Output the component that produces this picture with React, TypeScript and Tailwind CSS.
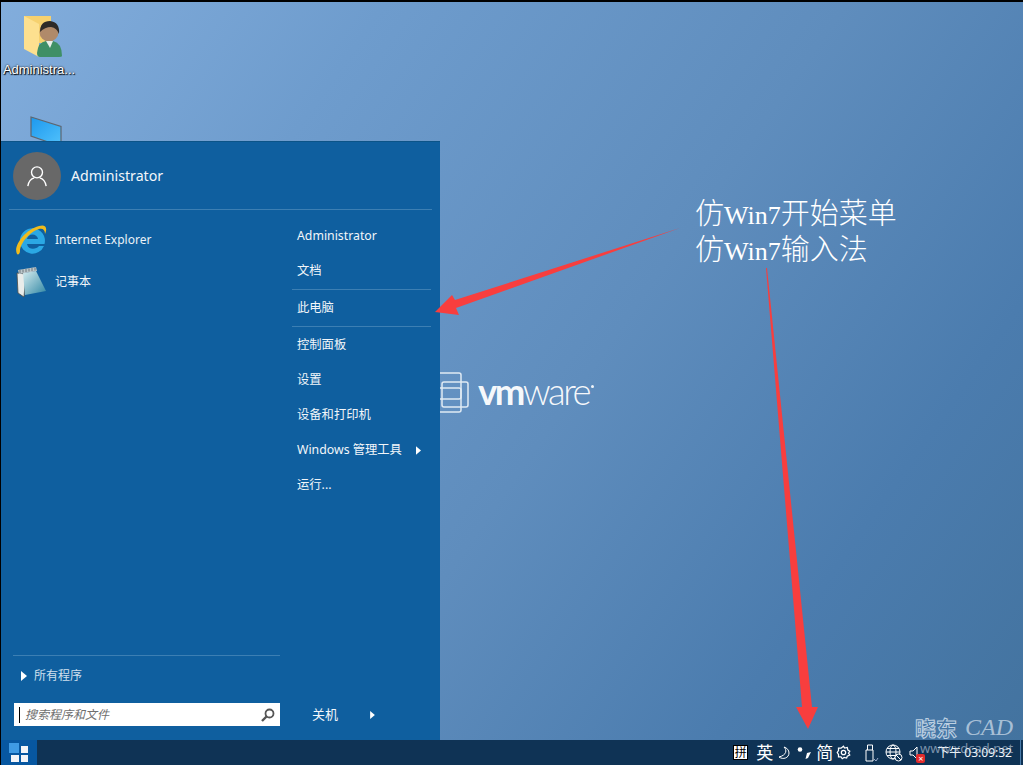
import { ReactNode } from "react";

const uiFont = "font-['Noto_Sans','Noto_Sans_CJK_SC',sans-serif]";

const Triangle = ({ className }: { className: string }) => (
  <svg viewBox="0 0 6 10" className={className}>
    <path d="M0 0 L6 5 L0 10 Z" fill="#fff" />
  </svg>
);

const FolderUser = () => (
  <svg viewBox="0 0 48 48" className="w-12 h-12">
    <path d="M9 3 H36 V30 H9 Z" fill="#f6d16f" />
    <path d="M9 3 L24 11 V44 L9 36 Z" fill="#fde08f" />
    <path d="M22 40 Q23 29 31 28 H38 Q47 30 47 43 Q47 44 44 44 H25 Q22 44 22 40 Z" fill="#3f8f66" />
    <circle cx="34" cy="19" r="9.5" fill="#b08a6a" />
    <path d="M25 19 Q25 8 35 8 Q45 9 44 21 Q42 15 36 14 Q30 14 25 19 Z" fill="#2d2a28" />
    <path d="M31 28 L35 35 L38 28 Z" fill="#e9eee9" />
  </svg>
);

const Monitor = () => (
  <svg viewBox="0 0 32 27" className="w-8 h-[27px]">
    <defs>
      <linearGradient id="screen" x1="0" y1="0" x2="1" y2="1">
        <stop offset="0" stopColor="#1c98ee" />
        <stop offset="1" stopColor="#4fc0fb" />
      </linearGradient>
    </defs>
    <path d="M1 1 L31 10.5 V27 H21 L1 20 Z" fill="url(#screen)" stroke="#5d6670" strokeWidth="1.2" />
  </svg>
);

const IeIcon = () => (
  <svg viewBox="0 0 32 32" className="w-8 h-8">
    <path
      fillRule="evenodd"
      d="M5 18 A12.5 12.5 0 1 1 29.5 20 H12 C13 26 21 26 24 22 H29 A12.5 12.5 0 0 1 5 18 Z M12 15 C13 9 22 9 23 15 Z"
      fill="#2ba8e4"
    />
    <path d="M2 30 C-2 23 9 6 24 2 C30 0 33 3 30 10 C30 6 28 4 24 5 C14 8 5 20 5 27 C5 30 3 31 2 30 Z" fill="#f0bb1c" />
  </svg>
);

const NotepadIcon = () => (
  <svg viewBox="0 0 32 32" className="w-8 h-8">
    <defs>
      <linearGradient id="cover" x1="0" y1="0" x2="1" y2="1">
        <stop offset="0" stopColor="#d5ecef" />
        <stop offset="1" stopColor="#2f86a3" />
      </linearGradient>
    </defs>
    <path d="M2 7 L3 27 L9 31 L11 8 Z" fill="#e9ecea" stroke="#4f4d45" strokeWidth="0.8" />
    <path d="M8 7 L21 5 L31 25 L10 29 Z" fill="url(#cover)" />
    <path d="M3 4 L21 1 L22 5 L4 8 Z" fill="#bcc7cb" />
    <path d="M5 4 V7 M8 3.5 V6.5 M11 3 V6 M14 2.5 V5.5 M17 2 V5 M20 1.5 V4.5" stroke="#5a666b" strokeWidth="0.8" />
  </svg>
);

const RightItem = ({ children }: { children: ReactNode }) => (
  <div className="h-[35px] pt-[2px] flex items-center pl-[5px] text-[12.3px] leading-none text-[#f2f6fa]">{children}</div>
);

const TrayText = ({ className, children }: { className: string; children: ReactNode }) => (
  <span className={`text-white leading-none ${className}`}>{children}</span>
);

const StartMenu = () => (
  <div className={`absolute left-0 bottom-0 w-[439px] h-[599px] flex flex-col bg-[#0f5f9f] border-t border-[#0c5488] text-white ${uiFont}`}>
    <div className="h-[68px] mx-[8px] flex items-center pl-[4px] gap-[10px] border-b border-[#3c7fb3]">
      <div className="w-12 h-12 rounded-full bg-[#686868] flex items-center justify-center">
        <svg viewBox="0 0 24 24" className="w-[22px] h-[22px]" fill="none" stroke="#fff" strokeWidth="1.5">
          <circle cx="12" cy="8" r="6" />
          <path d="M2 23 C3 17 7 14.5 9 14 M22 23 C21 17 17 14.5 15 14" />
        </svg>
      </div>
      <span className="text-[14.2px] text-[#f2f6fa]">Administrator</span>
    </div>
    <div className="flex-1 flex min-h-0">
      <div className="w-[279px] flex flex-col">
        <div className="pt-[9px] pl-[14px] flex-1">
          <div className="h-[42px] flex items-center gap-[8px] text-[12px] text-[#eaf1f7]">
            <IeIcon />
            <span>Internet Explorer</span>
          </div>
          <div className="h-[42px] flex items-center gap-[8px] text-[12px] text-[#f2f6fa]">
            <NotepadIcon />
            <span>记事本</span>
          </div>
        </div>
        <div className="ml-[12px] border-t border-[#3c7fb3] h-[41px] flex items-center pl-[8px] gap-[7px] text-[12px] text-[#cfe0ee]">
          <Triangle className="w-[6px] h-[10px]" />
          <span>所有程序</span>
        </div>
        <div className="ml-[13px] mt-[7px] mb-[14px] h-[23px] bg-white flex items-center pl-[5px] pr-[5px] text-[12px] italic text-[#6f6f6f]">
          <span className="w-[1px] h-[16px] bg-black mr-[5px]" />
          <span className="flex-1 pt-[1px]">搜索程序和文件</span>
          <svg viewBox="0 0 14 14" className="w-[14px] h-[14px]" fill="none" stroke="#555" strokeWidth="1.8">
            <circle cx="8.5" cy="5.5" r="4" />
            <path d="M5.5 8.5 L1 13" strokeWidth="2.4" />
          </svg>
        </div>
      </div>
      <div className="flex-1 flex flex-col pl-[12px] pr-[9px]">
        <div className="pt-[8px]">
          <RightItem>Administrator</RightItem>
          <RightItem>文档</RightItem>
        </div>
        <div className="border-t border-[#3c7fb3] mt-[1px]">
          <RightItem>此电脑</RightItem>
        </div>
        <div className="border-t border-[#3c7fb3] mt-[1px]">
          <RightItem>控制面板</RightItem>
          <RightItem>设置</RightItem>
          <RightItem>设备和打印机</RightItem>
          <div className="h-[35px] pt-[2px] flex items-center pl-[5px] text-[12.3px] text-[#f2f6fa]">
            <span>Windows 管理工具</span>
            <Triangle className="w-[5px] h-[9px] ml-[14px]" />
          </div>
          <RightItem>运行...</RightItem>
        </div>
        <div className="mt-auto mb-[14px] h-[23px] flex items-center pl-[20px] text-[13px] text-[#f2f6fa]">
          <span>关机</span>
          <Triangle className="w-[5px] h-[8px] ml-[32px]" />
        </div>
      </div>
    </div>
  </div>
);

const Taskbar = () => (
  <div className={`h-[25px] flex items-center bg-[#0f3355] ${uiFont}`}>
    <div className="w-[36px] h-full bg-[#0757a1] flex items-center pl-[8px]">
      <svg viewBox="0 0 20 19" className="w-5 h-[19px]">
        <rect x="0" y="0" width="10" height="10" fill="#3f9ae4" />
        <rect x="12" y="3" width="7" height="7" fill="#f3f4f8" />
        <rect x="2" y="12" width="8" height="7" fill="#f3f4f8" />
        <rect x="12" y="12" width="7" height="7" fill="#f3f4f8" />
      </svg>
    </div>
    <div className="flex-1" />
    <div className="w-[15px] h-[15px] bg-white border border-black flex items-center justify-center text-[12px] leading-none text-black">拼</div>
    <TrayText className="ml-[8px] text-[17px]">英</TrayText>
    <svg viewBox="0 0 12 14" className="w-3 h-[14px] ml-[5px]" fill="none" stroke="#fff" strokeWidth="1">
      <path d="M6 1 C9 4 9 9 1 11 C5 14 11 12 11 7 C11 4 9 2 6 1 Z" />
    </svg>
    <svg viewBox="0 0 14 12" className="w-[14px] h-3 ml-[7px]">
      <circle cx="3" cy="2.5" r="2.3" fill="#fff" />
      <path d="M10 6 L14 5 L11 11 L8.5 12 Z" fill="#fff" />
    </svg>
    <TrayText className="ml-[5px] text-[17px]">简</TrayText>
    <svg viewBox="0 0 24 24" className="w-[15px] h-[15px] ml-[3px]" fill="none" stroke="#fff" strokeWidth="2">
      <circle cx="12" cy="12" r="3.5" />
      <path d="M12 2 L14 5 L18 4 L19 8 L22 10 L20 13 L22 16 L18 18 L17 21 L13 20 L10 22 L8 19 L4 19 L4 15 L2 12 L4 9 L4 5 L8 5 Z" />
    </svg>
    <svg viewBox="0 0 14 18" className="w-[14px] h-[18px] ml-[14px]" fill="none" stroke="#fff" strokeWidth="1">
      <path d="M2 6 H8 V17 H1 V6 Z M2.5 6 V1 H7.5 V6" />
      <path d="M9 15 L11 17 L13 14" stroke="#9ac" />
    </svg>
    <svg viewBox="0 0 18 18" className="w-[18px] h-[18px] ml-[6px]" fill="none" stroke="#fff" strokeWidth="1">
      <circle cx="8" cy="8" r="7" />
      <ellipse cx="8" cy="8" rx="3" ry="7" />
      <path d="M1 8 H15 M2 4.5 H14 M2 11.5 H14" />
      <circle cx="13.5" cy="13.5" r="3.5" fill="#0f3355" />
      <path d="M11 11 L16 16" />
    </svg>
    <div className="relative w-[16px] h-[16px] ml-[6px]">
      <svg viewBox="0 0 10 16" className="w-[10px] h-4" fill="none" stroke="#fff" strokeWidth="1">
        <path d="M1 6 H4 L8 2 V14 L4 10 H1 Z" />
      </svg>
      <div className="absolute right-0 bottom-[-2px] w-[9px] h-[9px] rounded-[2px] bg-[#e32b2b] flex items-center justify-center text-[9px] leading-none text-white">×</div>
    </div>
    <span className="ml-[12px] mr-[8px] text-[12px] text-[#f2f6fa] leading-none">下午 03:09:32</span>
    <span className="w-[1px] h-full bg-[#4a7cab] mr-[2px]" />
  </div>
);

export default function App() {
  return (
    <div className="relative w-[1023px] h-[765px] overflow-hidden flex flex-col bg-black pl-[1px] pt-[2px]">
      <div className="relative flex-1 bg-[linear-gradient(125deg,#82addc_0%,#6e9ccd_25%,#5f8dbd_55%,#4b7cae_80%,#43739f_100%)]">
        <div className="flex flex-col items-center w-[76px] pt-[11px] font-['Liberation_Sans',sans-serif]">
          <FolderUser />
          <span className="mt-[2px] text-[13px] leading-none text-white [text-shadow:1px_1px_1px_#000,0_0_2px_#000]">Administra...</span>
        </div>
        <div className="mt-[40px] ml-[29px]">
          <Monitor />
        </div>

        <div className="absolute left-[429px] top-[370px] flex items-center">
          <svg viewBox="0 0 40 42" className="w-10 h-[42px]" fill="none" stroke="#dfeaf4" strokeWidth="1.5">
            <rect x="1" y="1" width="30" height="26" rx="2" />
            <rect x="12" y="10" width="26" height="25" rx="2" />
            <rect x="1" y="16" width="30" height="24" rx="2" />
          </svg>
          <span className="ml-[8px] -mt-[4px] text-[36.5px] leading-none tracking-[-2.5px] text-white/95 font-light font-['Lato',sans-serif]">
            <span className="font-bold">vm</span>ware
          </span>
          <span className="ml-[2px] mb-[13px] w-[3px] h-[3px] rounded-full bg-white/90" />
        </div>

        <div className="absolute left-[694px] top-[191px] text-white font-['Noto_Sans_CJK_SC',serif] font-light text-[29px] whitespace-nowrap">
          <div className="h-[36px] leading-[36px]">仿<span className="font-['Liberation_Serif',serif] text-[26px] leading-none">Win7</span>开始菜单</div>
          <div className="h-[36px] leading-[36px]">仿<span className="font-['Liberation_Serif',serif] text-[26px] leading-none">Win7</span>输入法</div>
        </div>

        <StartMenu />

        <div className="absolute right-[10px] bottom-[1px] flex items-center gap-[8px] pointer-events-none">
          <span className="text-[21px] leading-none font-bold text-transparent [-webkit-text-stroke:1px_#bdd0e2] font-['Noto_Sans_CJK_SC',sans-serif]">晓东</span>
          <span className="text-[24px] leading-none italic text-[#c3d4e4]/80 font-['Liberation_Serif',serif]">CAD</span>
        </div>
      </div>
      <Taskbar />
      <span className={`absolute left-[920px] top-[742px] text-[13px] leading-none text-[#c8d6e4]/60 ${uiFont}`}>www.xdcad.net</span>
      <svg viewBox="0 0 1023 765" className="absolute left-0 top-0 w-[1023px] h-[765px] pointer-events-none" fill="#f83e3e">
        <path d="M680 228 L456 308 L459 315 L435 312 L452 295 L455 300 Z" />
        <path d="M766 268 L767 268 L812 707 L818 707 L808 729 L796 707 L802 707 Z" />
      </svg>
    </div>
  );
}
